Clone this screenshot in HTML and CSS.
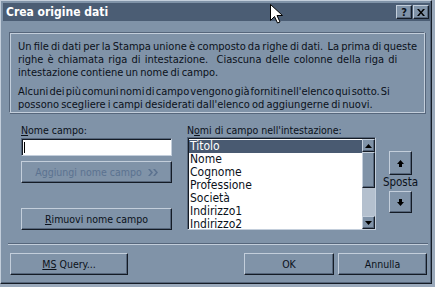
FILE: index.html
```html
<!DOCTYPE html>
<html lang="it">
<head>
  <meta charset="UTF-8" />
  <title>Crea origine dati</title>
  <link rel="stylesheet" href="styles.css">
</head>
<body>

  <div class="window">
    <div class="titlebar">
      <span class="title">Crea origine dati</span>
      <div class="caption-buttons">
        <span class="cap-btn help">?</span>
        <span class="cap-btn close">
          <svg width="8" height="7" viewBox="0 0 8 7"><path d="M0 0h2l2 2.5L6 0h2L5 3.5 8 7H6L4 4.5 2 7H0l3-3.5z" fill="#000"/></svg>
        </span>
      </div>
    </div>

    <div class="info">
      <p>Un file di dati per la Stampa unione è composto da righe di dati.&nbsp; La prima di queste<br><span class="loose">righe è chiamata riga di intestazione.&nbsp; Ciascuna delle colonne della riga di</span><br>intestazione contiene un nome di campo.</p>
      <p><span class="tight">Alcuni dei più comuni nomi di campo vengono già forniti nell'elenco qui sotto. Si</span><br>possono scegliere i campi desiderati dall'elenco od aggiungerne di nuovi.</p>
    </div>

    <div class="fields">
      <div class="field-col">
        <div class="label"><u>N</u>ome campo:</div>
        <div class="textbox"><span class="caret"></span></div>
        <div class="btn disabled add-btn">
          <span>Aggiungi nome campo</span>
          <svg width="10" height="7" viewBox="0 0 10 7"><path d="M0 0h2l3 3.5L2 7H0l3-3.5zM5 0h2l3 3.5L7 7H5l3-3.5z" fill="currentColor"/></svg>
        </div>
        <div class="btn remove-btn"><span><u>R</u>imuovi nome campo</span></div>
      </div>

      <div class="list-col">
        <div class="label">N<u>o</u>mi di campo nell'intestazione:</div>
        <div class="listbox">
          <ul class="items">
            <li class="selected">Titolo</li>
            <li>Nome</li>
            <li>Cognome</li>
            <li>Professione</li>
            <li>Società</li>
            <li>Indirizzo1</li>
            <li>Indirizzo2</li>
          </ul>
          <div class="scrollbar">
            <div class="sb-btn">
              <svg width="7" height="4" viewBox="0 0 7 4"><path d="M3.5 0L7 4H0z" fill="#000"/></svg>
            </div>
            <div class="sb-thumb"></div>
            <div class="sb-track"></div>
            <div class="sb-btn">
              <svg width="7" height="4" viewBox="0 0 7 4"><path d="M0 0h7L3.5 4z" fill="#000"/></svg>
            </div>
          </div>
        </div>
      </div>

      <div class="move-col">
        <div class="btn move-btn">
          <svg width="7" height="7" viewBox="0 0 7 7"><path d="M3.5 0L7 4H5v3H2V4H0z" fill="#000"/></svg>
        </div>
        <div class="move-label">Sposta</div>
        <div class="btn move-btn down">
          <svg width="7" height="7" viewBox="0 0 7 7"><path d="M2 0h3v3h2L3.5 7 0 3h2z" fill="#000"/></svg>
        </div>
      </div>
    </div>

    <div class="separator"></div>

    <div class="footer">
      <div class="btn query-btn"><span><u>MS</u> Query...</span></div>
      <div class="btn ok-btn"><span>OK</span></div>
      <div class="btn cancel-btn"><span>Annulla</span></div>
    </div>

    <svg class="cursor" width="13" height="20" viewBox="0 0 13 20">
      <path d="M0.5 0.5v16l4-4 3 6.5 2.5-1-3-6.5h5.5z" fill="#fff" stroke="#000"/>
    </svg>
  </div>

</body>
</html>
```

FILE: styles.css
```css
:root {
  --face: #8093a8;
  --title: #4b5d74;
  --light: #c3cedb;
  --shadow: #56667b;
  --dark: #141b25;
  --text: #0b111a;
  --muted: #5b7290;
  --desktop: #9aa9bb;
}

* {
  box-sizing: border-box;
}

body {
  margin: 0;
  background: var(--desktop);
  font-family: 'DejaVu Sans Condensed', 'DejaVu Sans', sans-serif;
  font-stretch: condensed;
  font-size: 10.5px;
  color: var(--text);
}

.window {
  position: relative;
  width: 432px;
  height: 284px;
  background: var(--face);
  border: 1px solid;
  border-color: var(--light) var(--dark) var(--dark) var(--light);
  box-shadow: inset -1px -1px var(--shadow);
}

.titlebar {
  display: flex;
  align-items: center;
  height: 18px;
  margin: 2px 1px 0 2px;
  padding: 0 1px 0 3px;
  background: var(--title);
}

.title {
  flex: 1;
  font-weight: 700;
  font-size: 12px;
  color: #fff;
}

.caption-buttons {
  display: flex;
  gap: 1px;
}

.cap-btn {
  display: flex;
  align-items: center;
  justify-content: center;
  width: 16px;
  height: 14px;
  background: var(--face);
  border: 1px solid;
  border-color: var(--light) var(--dark) var(--dark) var(--light);
  box-shadow: inset -1px -1px var(--shadow);
  font-weight: 700;
  font-size: 11px;
  line-height: 1;
}

.info {
  width: 416px;
  margin: 11px 0 0 8px;
  padding: 7px 7px 1px 8px;
  border: 1px solid;
  border-color: var(--shadow) var(--light) var(--light) var(--shadow);
  box-shadow: inset 1px 1px var(--light), 1px 1px var(--shadow);
  font-size: 11px;
  word-spacing: -1px;
  line-height: 13px;
}

.info p {
  margin: 0;
  white-space: nowrap;
}

.info p + p {
  margin-top: 6px;
}

.info .loose {
  word-spacing: 1px;
}

.info .tight {
  word-spacing: -2px;
}

.fields {
  display: flex;
  margin: 11px 0 0 20px;
}

.label {
  line-height: 13px;
}

.field-col {
  width: 151px;
}

.textbox {
  height: 18px;
  margin-top: 1px;
  padding: 3px 0 0 2px;
  background: #fff;
  border: 1px solid;
  border-color: var(--shadow) var(--light) var(--light) var(--shadow);
  box-shadow: inset 1px 1px var(--dark);
}

.caret {
  display: block;
  width: 1px;
  height: 11px;
  background: #000;
}

.btn {
  display: flex;
  align-items: center;
  justify-content: center;
  gap: 6px;
  height: 22px;
  background: var(--face);
  border: 1px solid;
  border-color: var(--light) var(--dark) var(--dark) var(--light);
  box-shadow: inset -1px -1px var(--shadow);
}

.btn.disabled {
  color: var(--muted);
}

.add-btn {
  margin-top: 5px;
}

.remove-btn {
  margin-top: 25px;
}

.list-col {
  width: 189px;
  margin-left: 15px;
}

.listbox {
  display: flex;
  height: 93px;
  background: #fff;
  border: 1px solid;
  border-color: var(--shadow) var(--light) var(--light) var(--shadow);
  box-shadow: inset 1px 1px var(--dark);
  padding: 2px 0 0 1px;
  overflow: hidden;
}

.items {
  flex: 1;
  margin: 0;
  padding: 0;
  list-style: none;
  font-size: 12px;
  line-height: 13px;
}

.items li {
  padding-left: 1px;
}

.items li.selected {
  background: #495a71;
  color: #fff;
}

.scrollbar {
  display: flex;
  flex-direction: column;
  width: 13px;
  margin-top: -1px;
}

.sb-btn,
.sb-thumb {
  background: var(--face);
  border: 1px solid;
  border-color: var(--light) var(--dark) var(--dark) var(--light);
  box-shadow: inset -1px -1px var(--shadow);
}

.sb-btn {
  display: flex;
  align-items: center;
  justify-content: center;
  height: 13px;
}

.sb-thumb {
  height: 36px;
}

.sb-track {
  flex: 1;
  background: #b4c0ce;
}

.move-col {
  display: flex;
  flex-direction: column;
  align-items: center;
  width: 33px;
  margin-left: 8px;
  padding-top: 27px;
}

.move-btn {
  width: 23px;
  height: 24px;
}

.move-btn.down {
  height: 22px;
  margin-top: 2px;
}

.move-label {
  line-height: 13px;
  font-size: 11.5px;
  margin-top: 1px;
}

.separator {
  height: 2px;
  margin: 13px 3px 0 7px;
  border-top: 1px solid var(--shadow);
  border-bottom: 1px solid var(--light);
}

.footer {
  display: flex;
  margin: 8px 4px 0 9px;
}

.query-btn {
  width: 118px;
}

.ok-btn {
  width: 90px;
  margin-left: auto;
}

.cancel-btn {
  width: 89px;
  margin-left: 4px;
}

.cursor {
  position: absolute;
  left: 269px;
  top: 3px;
}
```
